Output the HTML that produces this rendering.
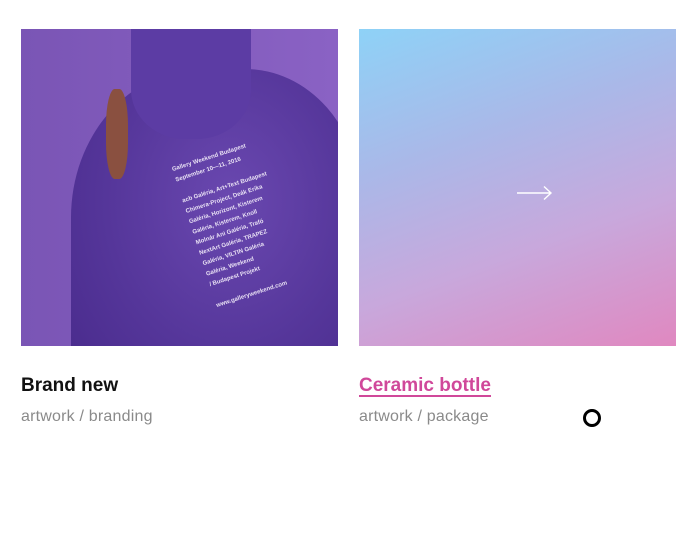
<!DOCTYPE html>
<html><head><style>
body{margin:0;width:696px;height:554px;background:#fff;position:relative;font-family:"Liberation Sans",sans-serif;overflow:hidden}
.img{position:absolute;top:29px;width:317px;height:317px}
#a{left:21px;background:#7d56b8;overflow:hidden}
#b{left:359px;background:linear-gradient(160deg,#8ed2f7 0%,#aab8e8 35%,#c8a8dc 65%,#e088c0 100%)}
h3{position:absolute;top:375px;margin:0;font-size:19px;font-weight:bold}
.s{position:absolute;top:408px;font-size:16px;color:#8a8a8a;letter-spacing:0.2px}
</style></head><body>
<div class="img" id="a">
<div style="position:absolute;left:0;top:0;width:317px;height:317px;background:linear-gradient(90deg,#7a55b5,#8a62c4)"></div>
<div style="position:absolute;left:50px;top:40px;width:290px;height:330px;border-radius:45% 40% 0 0;background:radial-gradient(ellipse at 55% 40%,#6a48b0 0%,#55369a 55%,#47298a 100%)"></div>
<div style="position:absolute;left:110px;top:0;width:120px;height:110px;border-radius:0 0 45% 45%;background:#5c3ca4"></div>
<div style="position:absolute;left:85px;top:60px;width:22px;height:90px;background:#8a5040;border-radius:40%"></div>
<div style="position:absolute;left:175px;top:115px;width:110px;height:180px;transform:rotate(-18deg);color:#e8e0f4;font-size:6px;line-height:11px;font-weight:bold">Gallery Weekend Budapest<br>September 10—11, 2016<br><br>acb Galéria, Art+Text Budapest<br>Chimera-Project, Deák Erika<br>Galéria, Horizont, Kisterem<br>Galéria, Kisterem, Knoll<br>Molnár Ani Galéria, Trafó<br>NextArt Galéria, TRAPEZ<br>Galéria, VILTIN Galéria<br>Galéria, Weekend<br>/ Budapest Projekt<br><br>www.galleryweekend.com</div>
</div>
<div class="img" id="b"><svg style="position:absolute;left:156px;top:156px" width="40" height="16"><path d="M2 8H36M29 1.5L36 8L29 14.5" stroke="#fff" stroke-width="1.4" fill="none"/></svg></div>
<h3 style="left:21px;color:#111">Brand new</h3>
<h3 style="left:359px;color:#d0489a;text-decoration:underline;text-underline-offset:4px;text-decoration-thickness:2px">Ceramic bottle</h3>
<div class="s" style="left:21px">artwork / branding</div>
<div class="s" style="left:359px">artwork / package</div>
<div style="position:absolute;left:583px;top:409px;width:12px;height:12px;border:3px solid #000;border-radius:50%"></div>
</body></html>
